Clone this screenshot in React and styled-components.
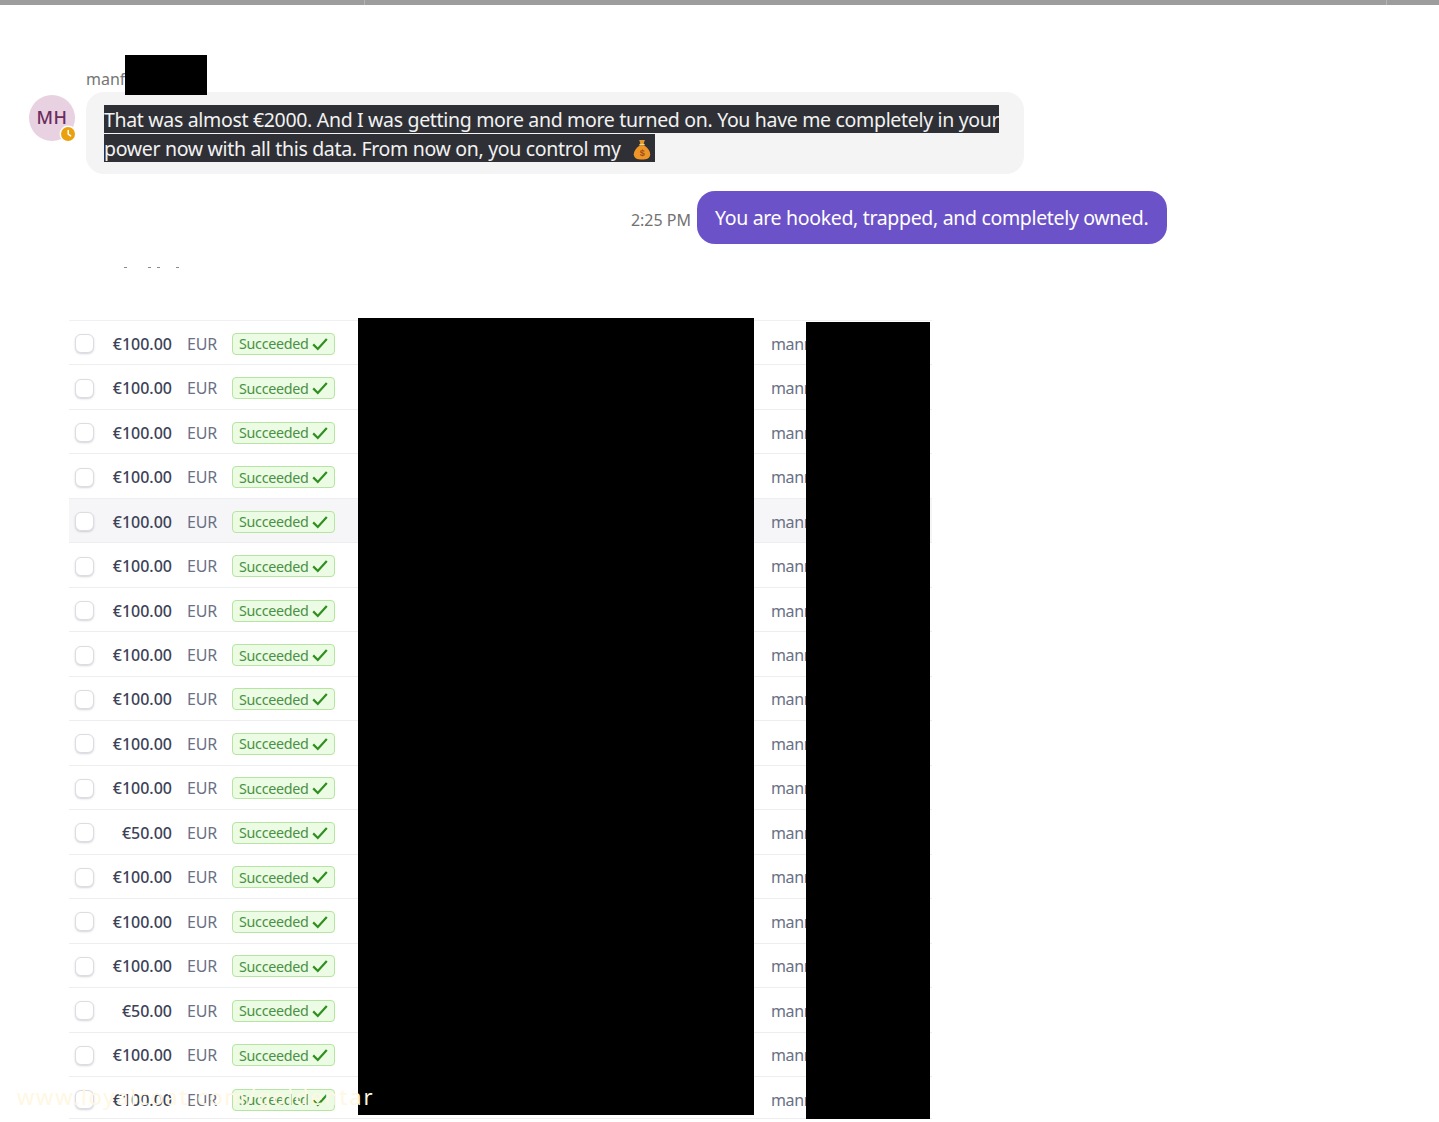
import React from 'react';
import styled, { createGlobalStyle } from 'styled-components';

const amounts = [
  '€100.00', '€100.00', '€100.00', '€100.00', '€100.00', '€100.00',
  '€100.00', '€100.00', '€100.00', '€100.00', '€100.00', '€50.00',
  '€100.00', '€100.00', '€100.00', '€50.00', '€100.00', '€100.00',
];

const tickGaps = [0, 21, 6, 16];

export default function App() {
  return (
    <Page>
      <GlobalStyle />
      <TopBar>
        <TopDivider />
        <TopDivider />
      </TopBar>
      <Chat>
        <SenderName>manf</SenderName>
        <NameRedaction />
        <IncomingRow>
          <Avatar>
            MH
            <StatusDot>
              <svg width="14" height="14" viewBox="0 0 14 14">
                <path d="M7.2 3.4v3.8l2.4 1.7" fill="none" stroke="#fff" strokeWidth="1.5" strokeLinecap="round" />
              </svg>
            </StatusDot>
          </Avatar>
          <IncomingBubble>
            <Selected>
              That was almost €2000. And I was getting more and more turned on. You have me completely in your
              <br />
              power now with all this data. From now on, you control my <MoneyBag />
            </Selected>
          </IncomingBubble>
        </IncomingRow>
        <OutgoingRow>
          <Time>2:25 PM</Time>
          <OutgoingBubble>You are hooked, trapped, and completely owned.</OutgoingBubble>
        </OutgoingRow>
        <ClippedLine>
          {tickGaps.map((gap, i) => (
            <Tick key={i} $gap={gap} />
          ))}
        </ClippedLine>
      </Chat>
      <TableWrap>
        <Table>
          {amounts.map((amount, i) => (
            <Row key={i} $hover={i === 4}>
              <CheckCell><Checkbox /></CheckCell>
              <Amount>{amount}</Amount>
              <Currency>EUR</Currency>
              <StatusCell>
                <Badge>
                  Succeeded
                  <svg width="16" height="14" viewBox="0 0 16 14">
                    <path d="M1.2 7.4l4.6 4.6L14.8 2" fill="none" stroke="#2f8f1f" strokeWidth="2.2" />
                  </svg>
                </Badge>
              </StatusCell>
              <HiddenCell />
              <Customer>mann</Customer>
            </Row>
          ))}
        </Table>
        <MiddleRedaction />
        <RightRedaction />
        <Watermark>www.loyalcoat.com/goldentar</Watermark>
      </TableWrap>
    </Page>
  );
}

function MoneyBag() {
  return (
    <BagIcon width="18" height="21" viewBox="0 0 18 21">
      <path d="M6.2 1h5.600l-1.300 4.200H7.500z" fill="#e39a28" />
      <rect x="6.300" y="4.700" width="5.400" height="1.800" rx=".9" fill="#f6d67f" />
      <path d="M6.600 6.500C3 9.300.8 12.200.8 15.200c0 3.900 3.500 5.400 8.200 5.400s8.200-1.500 8.200-5.400c0-3-2.200-5.900-5.800-8.700z" fill="#ee9528" />
      <text x="9" y="17.400" textAnchor="middle" fontSize="9" fontFamily="Liberation Sans, sans-serif" fontWeight="700" fill="#a04c18">$</text>
    </BagIcon>
  );
}

const GlobalStyle = createGlobalStyle`
  html, body {
    margin: 0;
    padding: 0;
    background: #fff;
  }
  body {
    font-family: "Noto Sans", "Open Sans", sans-serif;
  }
`;

const Page = styled.div`
  width: 1439px;
  height: 1122px;
  overflow: hidden;
  background: #fff;
`;

const TopBar = styled.div`
  height: 5px;
  background: #9d9d9d;
  display: flex;
  padding-left: 364px;
  gap: 1021px;
`;

const TopDivider = styled.div`
  width: 1px;
  height: 5px;
  background: #b4b4b4;
`;

const Chat = styled.div`
  position: relative;
  padding: 64px 0 0 29px;
  display: flex;
  flex-direction: column;
`;

const SenderName = styled.div`
  margin-left: 57px;
  font-size: 16px;
  line-height: 20px;
  color: #757575;
  height: 23px;
`;

const NameRedaction = styled.div`
  position: absolute;
  left: 125px;
  top: 50px;
  width: 82px;
  height: 40px;
  background: #000;
`;

const IncomingRow = styled.div`
  display: flex;
  gap: 11px;
`;

const Avatar = styled.div`
  position: relative;
  margin-top: 3px;
  width: 46px;
  height: 46px;
  padding-bottom: 2px;
  box-sizing: border-box;
  border-radius: 50%;
  background: #e8d1e1;
  color: #6b2c5e;
  font-size: 18px;
  font-weight: 500;
  letter-spacing: .5px;
  display: flex;
  align-items: center;
  justify-content: center;
`;

const StatusDot = styled.div`
  position: absolute;
  right: 0;
  bottom: 0;
  width: 14px;
  height: 14px;
  border-radius: 50%;
  background: #eba10e;
  box-shadow: 0 0 0 1.500px #fff;
  display: flex;
`;

const IncomingBubble = styled.div`
  width: 938px;
  height: 82px;
  box-sizing: border-box;
  padding: 13px 18px;
  border-radius: 18px;
  background: #f4f4f4;
  font-size: 19.500px;
  line-height: 29px;
  letter-spacing: -.32px;
  color: #f2f2f2;
  white-space: nowrap;
`;

const Selected = styled.span`
  background: #2f3036;
  padding-top: 1px;
`;

const BagIcon = styled.svg`
  vertical-align: -4px;
  margin: 0 4px 0 8px;
`;

const OutgoingRow = styled.div`
  display: flex;
  align-items: center;
  justify-content: flex-end;
  width: 1138px;
  margin-top: 17px;
  gap: 6px;
`;

const Time = styled.div`
  font-size: 16px;
  color: #727272;
  margin-top: 5px;
`;

const OutgoingBubble = styled.div`
  height: 53px;
  width: 470px;
  box-sizing: border-box;
  border-radius: 18px;
  background: #6b52c8;
  color: #fff;
  font-size: 19.500px;
  letter-spacing: -.33px;
  line-height: 53px;
  padding-left: 18px;
  white-space: nowrap;
`;

const ClippedLine = styled.div`
  display: flex;
  margin: 23px 0 0 95px;
`;

const Tick = styled.div`
  width: 3px;
  height: 1px;
  margin-left: ${(p) => p.$gap}px;
  background: #8a8a8a;
`;

const TableWrap = styled.div`
  position: relative;
  margin: 52px 0 0 69px;
  width: 863px;
`;

const Table = styled.div`
  display: flex;
  flex-direction: column;
  border-top: 1px solid #f0f0f2;
`;

const Row = styled.div`
  height: 44.470px;
  padding-top: 2px;
  box-sizing: border-box;
  display: flex;
  align-items: center;
  border-bottom: 1px solid #eeeef0;
  background: ${(p) => (p.$hover ? '#f6f6f8' : '#fff')};

  &:last-child {
    height: 42.500px;
    padding-top: 4.500px;
  }
`;

const CheckCell = styled.div`
  width: 43px;
  padding-left: 6px;
  box-sizing: border-box;
`;

const Checkbox = styled.div`
  width: 19px;
  height: 19px;
  box-sizing: border-box;
  border-radius: 6px;
  background: #fff;
  border: 1px solid #dcdce2;
  box-shadow: 0 1px 2px rgba(60, 66, 87, .22);
`;

const Amount = styled.div`
  width: 60px;
  text-align: right;
  font-size: 16px;
  font-weight: 500;
  color: #3c4257;
`;

const Currency = styled.div`
  width: 45px;
  margin-left: 15px;
  font-size: 16px;
  letter-spacing: -.2px;
  color: #6a7085;
`;

const StatusCell = styled.div`
  width: 126px;
`;

const Badge = styled.div`
  width: 103px;
  height: 22px;
  box-sizing: border-box;
  padding-left: 6px;
  display: flex;
  align-items: center;
  gap: 3px;
  border-radius: 4px;
  border: 1px solid #b5e5a0;
  background: #ecfbe4;
  color: #4a9144;
  font-size: 14.300px;
  letter-spacing: -.3px;
`;

const HiddenCell = styled.div`
  width: 413px;
`;

const Customer = styled.div`
  font-size: 16px;
  letter-spacing: -.35px;
  color: #6a7085;
`;

const MiddleRedaction = styled.div`
  position: absolute;
  left: 289px;
  top: -2px;
  width: 396px;
  height: 797px;
  background: #000;
`;

const RightRedaction = styled.div`
  position: absolute;
  left: 737px;
  top: 2px;
  width: 124px;
  height: 797px;
  background: #000;
`;

const Watermark = styled.div`
  position: absolute;
  left: -52px;
  top: 762px;
  font-size: 22px;
  line-height: 28px;
  letter-spacing: 1.800px;
  white-space: nowrap;
  color: #fff7e2;
`;
